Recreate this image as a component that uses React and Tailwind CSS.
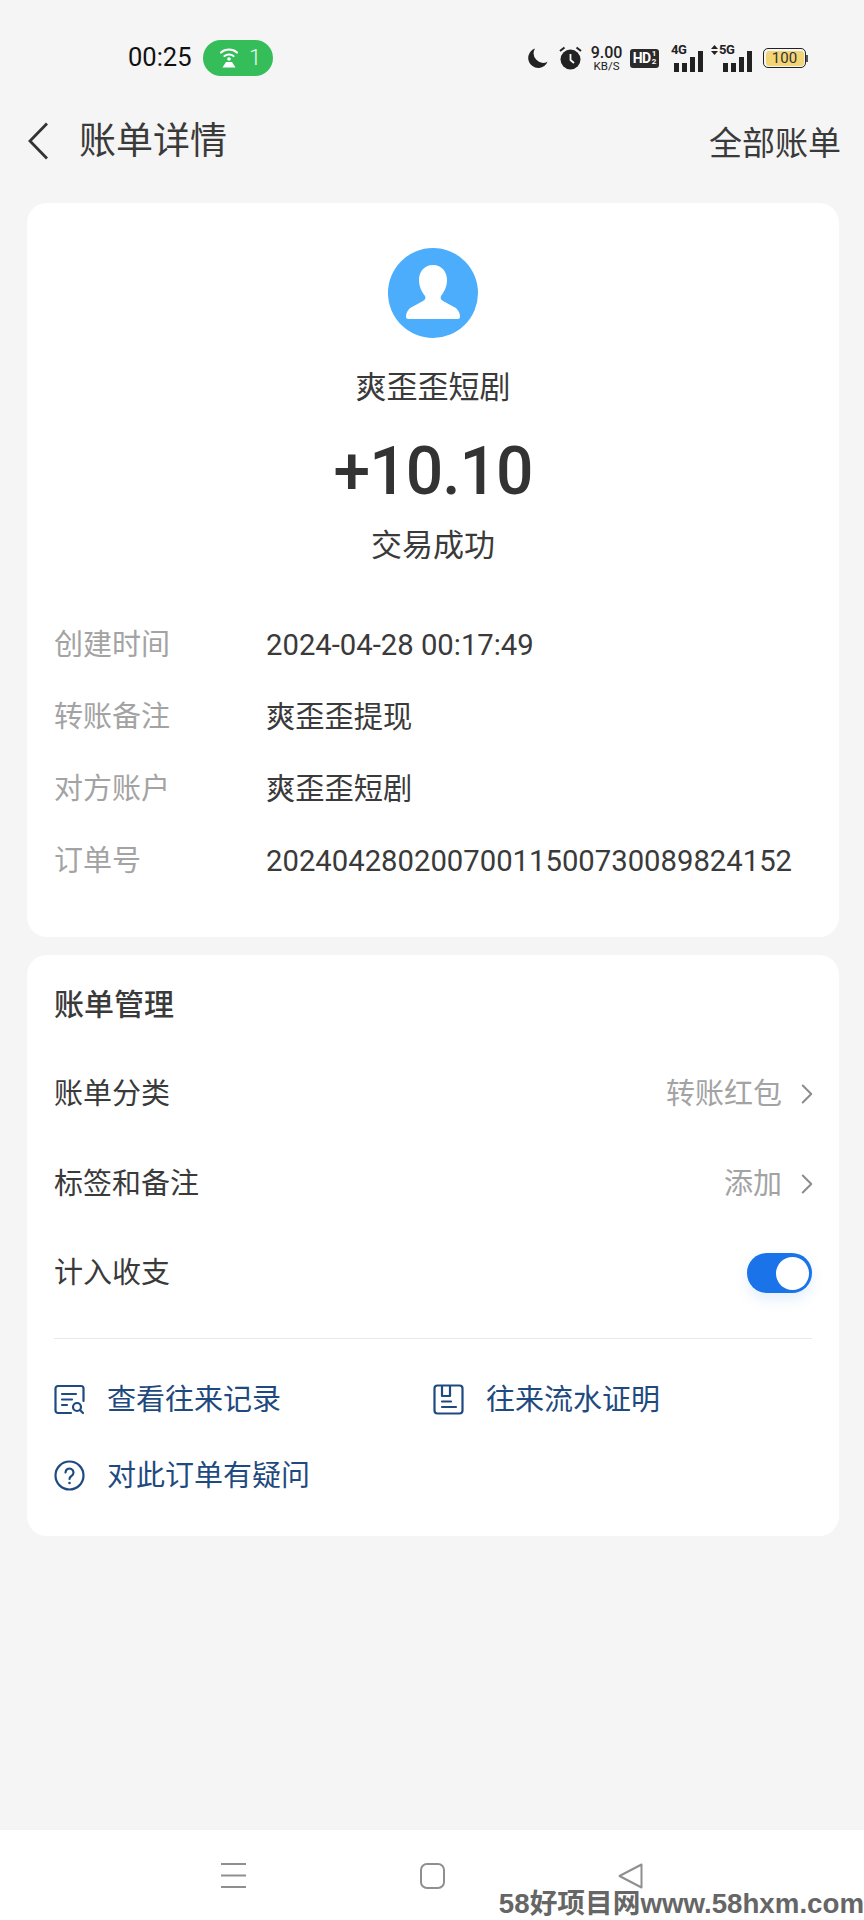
import { ChevronRight } from "lucide-react";

const CJK = "font-['Roboto','Noto_Sans_CJK_SC',sans-serif]";

const details = [
  ["创建时间", "2024-04-28 00:17:49"],
  ["转账备注", "爽歪歪提现"],
  ["对方账户", "爽歪歪短剧"],
  ["订单号", "20240428020070011500730089824152"],
];

function Hotspot() {
  return (
    <svg width="26" height="26" viewBox="0 0 26 26" fill="none" stroke="#fff" strokeLinecap="round">
      <path d="M5 7.500c4.500-4 11.500-4 16 0" strokeWidth="2.200" />
      <path d="M8.500 11c2.500-2 6.500-2 9 0" strokeWidth="2.200" />
      <circle cx="13" cy="14" r="1.800" fill="#fff" stroke="none" />
      <path d="M10 17h6l3.500 5.500h-13z" fill="#fff" stroke="none" />
    </svg>
  );
}

function Moon() {
  return (
    <svg width="21" height="21" viewBox="0 0 21 21">
      <path d="M8 .5a10 10 0 1 0 12.500 13.200A9.500 9.500 0 0 1 8 .5z" fill="#222" />
    </svg>
  );
}

function Alarm() {
  return (
    <svg width="23" height="24" viewBox="0 0 23 24" fill="none">
      <circle cx="11.500" cy="13.500" r="10" fill="#222" />
      <path d="M11.500 8v6l3.500 3" stroke="#f5f5f5" strokeWidth="1.800" />
      <path d="M1 5l4.500-3.500M22 5l-4.500-3.500" stroke="#222" strokeWidth="2" />
    </svg>
  );
}

function Bars() {
  return (
    <div className="flex items-end gap-[3px]">
      <div className="w-[5px] h-[9px] bg-[#222]" />
      <div className="w-[5px] h-[9px] bg-[#222]" />
      <div className="w-[5px] h-[15px] bg-[#222]" />
      <div className="w-[5px] h-[21px] bg-[#222]" />
    </div>
  );
}

function StatusBar() {
  return (
    <div className="h-[96px] pt-[20px] flex items-center relative">
      <span className="ml-[128px] w-[64px] text-[25.500px] leading-none text-[#111] font-['Roboto',sans-serif]">00:25</span>
      <div className="ml-[11px] w-[70px] h-[36px] rounded-full bg-[#35bd59] flex items-center pl-[13px] gap-[7px]">
        <Hotspot />
        <span className="text-[22px] leading-none font-light text-[#e8f8ec] font-['Roboto',sans-serif]">1</span>
      </div>
      <div className="ml-[254px] flex items-center font-['Roboto',sans-serif] text-[#222]">
        <Moon />
        <div className="ml-[11px]"><Alarm /></div>
        <div className="ml-[8px] w-[33px] flex flex-col items-center">
          <span className="text-[16px] leading-[16px] font-medium">9.00</span>
          <span className="text-[11.500px] leading-[11px]">KB/S</span>
        </div>
        <div className="ml-[7px] w-[29px] h-[19px] rounded-[3px] bg-[#2b2b2b] text-white flex items-center justify-center gap-[1px]">
          <span className="text-[14px] leading-none font-bold tracking-[-0.500px]">HD</span>
          <span className="text-[8px] leading-[8px] font-bold flex flex-col"><span>1</span><span>2</span></span>
        </div>
        <div className="ml-[12px] w-[32px] relative h-[28px] flex items-end justify-end">
          <Bars />
          <span className="absolute left-0 top-[-1px] text-[13px] leading-none font-bold tracking-[-0.500px]">4G</span>
        </div>
        <div className="ml-[8px] w-[41px] relative h-[28px] flex items-end justify-end">
          <Bars />
          <svg className="absolute left-0 top-[1px]" width="7" height="10" viewBox="0 0 7 10" fill="#222">
            <path d="M3.500 0L7 4H0zM3.500 10L0 6h7z" />
          </svg>
          <span className="absolute left-[8px] top-[-1px] text-[13px] leading-none font-bold tracking-[-0.500px]">5G</span>
        </div>
        <div className="ml-[11px] flex items-center">
          <div className="w-[43px] h-[20px] rounded-[5px] border-[1.500px] border-[#222] p-[1.500px]">
            <div className="w-full h-full rounded-[3px] bg-[#f4d576] flex items-center justify-center text-[15px] leading-none text-[#333]">100</div>
          </div>
          <div className="w-[2px] h-[7px] bg-[#555]" />
        </div>
      </div>
    </div>
  );
}

function RecordIcon() {
  return (
    <svg width="31" height="31" viewBox="0 0 31 31" fill="none" stroke="#1f4a80" strokeWidth="2.200" strokeLinecap="round">
      <path d="M17 29H4a2.500 2.500 0 0 1-2.500-2.500v-22A2.500 2.500 0 0 1 4 2h23a2.500 2.500 0 0 1 2.500 2.500V17" />
      <path d="M8 10h14M8 15.500h10M8 21h5" />
      <circle cx="23" cy="23" r="4" />
      <path d="M26 26l3 3" />
    </svg>
  );
}

function ProofIcon() {
  return (
    <svg width="31" height="31" viewBox="0 0 31 31" fill="none" stroke="#1f4a80" strokeWidth="2.200" strokeLinecap="round" strokeLinejoin="round">
      <rect x="1.500" y="1.500" width="28" height="28" rx="3" />
      <path d="M9 2v10h8V2" />
      <path d="M9 17.500h9M9 23h14" />
    </svg>
  );
}

function QuestionIcon() {
  return (
    <svg width="31" height="31" viewBox="0 0 31 31" fill="none" stroke="#1f4a80" strokeWidth="2.200" strokeLinecap="round">
      <circle cx="15.500" cy="15.500" r="14" />
      <path d="M11.500 12.500a4 4 0 1 1 6 3.500c-1.300.8-2 1.500-2 3" />
      <circle cx="15.500" cy="23" r="1.300" fill="#1f4a80" stroke="none" />
    </svg>
  );
}

function Avatar() {
  return (
    <svg width="90" height="90" viewBox="0 0 90 90">
      <circle cx="45" cy="45" r="45" fill="#4badfb" />
      <path d="M45 17c-9 0-14 7-14 15 0 7 3 12 6 16 1 2 0 4-2 5l-11 6c-4 2-6 6-6 10 0 1 1 2 2 2h50c1 0 2-1 2-2 0-4-2-8-6-10l-11-6c-2-1-3-3-2-5 3-4 6-9 6-16 0-8-5-15-14-15z" fill="#fff" />
    </svg>
  );
}

function ManageRow({ label, value }) {
  return (
    <div className="h-[90px] flex items-center justify-between text-[29px]">
      <span className="pt-[4px] text-[#3a3a3a]">{label}</span>
      <div className="flex items-center">
        <span className="pt-[4px] text-[#a3a3a3]">{value}</span>
        <ChevronRight size={34} strokeWidth={1.400} color="#8c8c8c" className="ml-[8px] mr-[-12px] mt-[1px]" />
      </div>
    </div>
  );
}

function LinkItem({ icon, text, className }) {
  return (
    <div className={`flex items-center gap-[22px] h-[76px] text-[29px] text-[#1f4a80] ${className || ""}`}>
      {icon}
      <span className="pt-[3px]">{text}</span>
    </div>
  );
}

export default function App() {
  return (
    <div className={`relative w-[864px] h-[1920px] bg-[#f5f5f5] flex flex-col overflow-hidden ${CJK}`}>
      <StatusBar />

      <div className="h-[87px] flex items-center justify-between pl-[27px] pr-[23px]">
        <div className="flex items-center">
          <svg className="mt-[2px]" width="23" height="38" viewBox="0 0 23 38" fill="none" stroke="#333" strokeWidth="2.800">
            <path d="M20 1.500L3 19l17 17.500" />
          </svg>
          <span className="ml-[29px] pt-[4px] text-[37px] text-[#3a3a3a] leading-none">账单详情</span>
        </div>
        <span className="pt-[7px] text-[33px] text-[#3a3a3a] leading-none">全部账单</span>
      </div>

      <div className="mt-[20px] ml-[27px] w-[812px] bg-white rounded-[20px] pt-[45px] px-[27px] h-[734px]">
        <div className="flex flex-col items-center">
          <Avatar />
          <div className="mt-[25px] h-[50px] flex items-center text-[31px] text-[#3a3a3a]">爽歪歪短剧</div>
          <div className="h-[110px] flex items-center pt-[6px] text-[66px] font-medium text-[#333] tracking-[-1px]">+10.10</div>
          <div className="h-[44px] flex items-center pt-[2px] text-[31px] text-[#3a3a3a]">交易成功</div>
        </div>
        <div className="mt-[40px]">
          {details.map(([label, value]) => (
            <div key={label} className="h-[72px] flex items-center pt-[5px]">
              <span className="w-[212px] text-[29px] text-[#a3a3a3]">{label}</span>
              <span className="text-[29.250px] text-[#3a3a3a]">{value}</span>
            </div>
          ))}
        </div>
      </div>

      <div className="mt-[18px] ml-[27px] w-[812px] bg-white rounded-[20px] pt-[26px] px-[27px] h-[581px]">
        <div className="h-[46px] mb-[21px] flex items-center text-[30px] font-medium text-[#3a3a3a]">账单管理</div>
        <ManageRow label="账单分类" value="转账红包" />
        <ManageRow label="标签和备注" value="添加" />
        <div className="h-[90px] flex items-center justify-between text-[29px]">
          <span className="pt-[2px] text-[#3a3a3a]">计入收支</span>
          <div className="w-[65px] h-[40px] rounded-full bg-[#1a73e8] flex items-center justify-end pr-[3px] shadow-[0_6px_14px_rgba(26,115,232,0.12)]">
            <div className="w-[33px] h-[33px] rounded-full bg-white" />
          </div>
        </div>
        <div className="mt-[20px] h-[1px] bg-[#e8e8e8]" />
        <div className="pt-[22px]">
          <div className="flex">
            <LinkItem icon={<RecordIcon />} text="查看往来记录" className="w-[379px]" />
            <LinkItem icon={<ProofIcon />} text="往来流水证明" />
          </div>
          <LinkItem icon={<QuestionIcon />} text="对此订单有疑问" />
        </div>
      </div>

      <div className="mt-auto h-[90px] bg-white flex items-start pt-[33px] pl-[221px]">
        <svg width="25" height="25" viewBox="0 0 25 25" stroke="#8f8f8f" strokeWidth="2">
          <path d="M0 1h25M0 12.500h25M0 24h25" />
        </svg>
        <svg className="ml-[174px]" width="25" height="26" viewBox="0 0 25 26" fill="none" stroke="#8f8f8f" strokeWidth="2">
          <rect x="1" y="1" width="23" height="24" rx="6" />
        </svg>
        <svg className="ml-[173px]" width="25" height="26" viewBox="0 0 25 26" fill="none" stroke="#8f8f8f" strokeWidth="2" strokeLinejoin="round">
          <path d="M23.500 1.500v23L1.500 13z" />
        </svg>
      </div>

      <div className="absolute right-0 bottom-[2px] flex items-center text-[27.700px] leading-none font-bold text-[#666] font-['Liberation_Sans','Noto_Sans_CJK_SC',sans-serif] whitespace-nowrap">
        58好项目网www.58hxm.com
      </div>
    </div>
  );
}
